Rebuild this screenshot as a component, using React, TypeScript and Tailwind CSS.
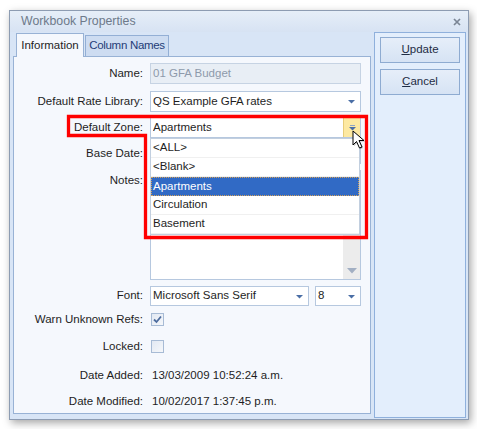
import type { ReactNode } from "react";

const FONT = { fontFamily: '"Liberation Sans", Arial, sans-serif' };

function Arrow({ color = "#4a6ea5" }: { color?: string }) {
  return (
    <svg width="7" height="5" viewBox="0 0 7 5">
      <polygon points="0,1 7,1 3.5,4.5" fill={color} />
    </svg>
  );
}

function Select({ value, w, hot }: { value: string; w: string; hot?: boolean }) {
  return (
    <div className={`${w} h-full flex items-center bg-white border border-[#b6c8df] pl-[2px]`}>
      <span className="flex-1 truncate">{value}</span>
      {hot ? (
        <div className="w-[17px] h-full flex flex-col items-center justify-center bg-[#fde9a2] border-l border-[#e8cd7a]">
          <div className="w-[5px] h-px bg-[#8fa6c8]" />
          <Arrow />
        </div>
      ) : (
        <div className="w-[17px] h-full flex items-center justify-center">
          <Arrow />
        </div>
      )}
    </div>
  );
}

function Check({ checked }: { checked?: boolean }) {
  return (
    <div className="w-[13px] h-[13px] ml-[1px] border border-[#a7bbd5] bg-gradient-to-br from-[#e2e9f3] to-[#f5f7fa] flex items-center justify-center">
      {checked && (
        <svg width="9" height="9" viewBox="0 0 9 9">
          <path d="M1 4.5 L3.5 7 L8 1.5" stroke="#4d6c9e" strokeWidth="1.8" fill="none" />
        </svg>
      )}
    </div>
  );
}

function Row({ label, mt, h = "h-[21px]", top, children }: { label: string; mt: string; h?: string; top?: boolean; children?: ReactNode }) {
  return (
    <div className={`flex ${mt} ${h} ${top ? "items-start" : "items-center"}`}>
      <div className={`w-[129px] shrink-0 text-right ${top ? "pt-[2px]" : ""}`}>{label}</div>
      <div className="ml-[7px] w-[211px] h-full flex items-center relative">{children}</div>
    </div>
  );
}

const ZONES = ["<ALL>", "<Blank>", "Apartments", "Circulation", "Basement"];

export default function App() {
  return (
    <div className="relative w-[477px] h-[429px] bg-white pt-[10px] pl-[9px] text-[11.5px] text-[#1e1e1e]" style={FONT}>
      <div className="w-[460px] h-[410px] flex flex-col border border-[#8d9cb2] bg-[#d8e5f6] shadow-[2px_3px_8px_rgba(0,0,0,0.35)]">
        {/* title */}
        <div className="h-[21px] flex items-center pl-[11px] pr-[6px] bg-gradient-to-b from-[#e6eef8] to-[#d7e3f3]">
          <span className="flex-1 text-[12.3px] text-[#6e7a8a]">Workbook Properties</span>
          <svg width="8" height="8" viewBox="0 0 8 8" className="mr-[1px]">
            <path d="M1 1 L7 7 M7 1 L1 7" stroke="#7b8595" strokeWidth="1.7" />
          </svg>
        </div>

        <div className="flex flex-1 pl-[3px]">
          {/* left */}
          <div className="w-[358px] flex flex-col">
            <div className="h-[24px] flex items-end pl-[3px]">
              <div className="h-[24px] w-[68px] flex items-center justify-center bg-[#f5f8fd] border border-b-0 border-[#98b2d5] relative top-px z-10">
                Information
              </div>
              <div className="h-[21px] w-[84px] ml-px flex items-center justify-center whitespace-nowrap tracking-[-0.3px] bg-[#cddcf1] border border-b-0 border-[#93afd5] text-[#1f3c78]">
                Column Names
              </div>
            </div>
            <div className="h-[358px] bg-[#f5f8fd] border border-[#98b2d5] flex flex-col">
              <Row label="Name:" mt="mt-[6px]">
                <div className="w-full h-full flex items-center pl-[2px] bg-[#e8eef5] border border-[#c6d3e3] text-[#8e9aab]">
                  01 GFA Budget
                </div>
              </Row>
              <Row label="Default Rate Library:" mt="mt-[7px]">
                <Select value="QS Example GFA rates" w="w-full" />
              </Row>
              <Row label="Default Zone:" mt="mt-[5px]">
                <Select value="Apartments" w="w-full" hot />
                <div className="absolute left-0 top-[21px] w-[210px] z-20 bg-white border border-[#c2cfdf] flex flex-col">
                  {ZONES.map((z) =>
                    z === "Apartments" ? (
                      <div key={z} className="h-[19px] flex items-center pl-[2px] bg-[#316ac5] text-white outline outline-1 outline-dotted outline-[#d3a15a] -outline-offset-1">
                        {z}
                      </div>
                    ) : (
                      <div key={z} className="h-[19px] flex items-center pl-[2px] border-b border-[#f0f0f0]">
                        {z}
                      </div>
                    ),
                  )}
                </div>
              </Row>
              <Row label="Base Date:" mt="mt-[5px]">
                <div className="w-full h-full bg-white border border-[#b6c8df]" />
              </Row>
              <Row label="Notes:" mt="mt-[6px]" h="h-[110px]" top>
                <div className="w-full h-full bg-white border border-[#b6c8df] flex justify-end">
                  <div className="w-[17px] h-full bg-[#ececec] flex flex-col justify-end items-center pb-[5px]">
                    <svg width="10" height="6" viewBox="0 0 10 6">
                      <polygon points="0,0 10,0 5,5.5" fill="#a2afc3" />
                    </svg>
                  </div>
                </div>
              </Row>
              <Row label="Font:" mt="mt-[6px]" h="h-[20px]">
                <Select value="Microsoft Sans Serif" w="w-[159px]" />
                <div className="ml-[6px] h-full flex-1">
                  <Select value="8" w="w-full" />
                </div>
              </Row>
              <Row label="Warn Unknown Refs:" mt="mt-[3px]">
                <Check checked />
              </Row>
              <Row label="Locked:" mt="mt-[6px]">
                <Check />
              </Row>
              <Row label="Date Added:" mt="mt-[8px]">
                <span className="pl-[2px]">13/03/2009 10:52:24 a.m.</span>
              </Row>
              <Row label="Date Modified:" mt="mt-[5px]">
                <span className="pl-[2px]">10/02/2017 1:37:45 p.m.</span>
              </Row>
            </div>
          </div>

          {/* right */}
          <div className="ml-[3px] w-[92px] h-[386px] bg-[#e3eefc] border border-[#8fb0dc] flex flex-col items-center pt-[4px]">
            <button className="w-[80px] h-[26px] bg-gradient-to-b from-[#e6eef9] to-[#d6e3f4] border border-[#8eabd1] text-[#1f2c44]">
              <span className="underline">U</span>pdate
            </button>
            <button className="mt-[6px] w-[80px] h-[26px] bg-gradient-to-b from-[#e6eef9] to-[#d6e3f4] border border-[#8eabd1] text-[#1f2c44]">
              <span className="underline">C</span>ancel
            </button>
          </div>
        </div>
      </div>

      {/* annotation and cursor */}
      <svg className="absolute left-0 top-0 pointer-events-none z-30" width="477" height="429">
        <path d="M68.5 116.5 H366.5 V237.5 H145.5 V135.5 H68.5 Z" stroke="#ff0000" strokeWidth="3.3" fill="none" />
        <g transform="translate(353 131)">
          <path d="M1 1 L1 15 L4.5 11.5 L7.5 18 L10 17 L7 10.5 L12 10.5 Z" fill="rgba(0,0,0,0.25)" />
          <path d="M0 0 L0 14 L3.5 10.5 L6.5 17 L9 16 L6 9.5 L11 9.5 Z" fill="#fff" stroke="#000" strokeWidth="1" strokeLinejoin="round" />
        </g>
      </svg>
    </div>
  );
}
